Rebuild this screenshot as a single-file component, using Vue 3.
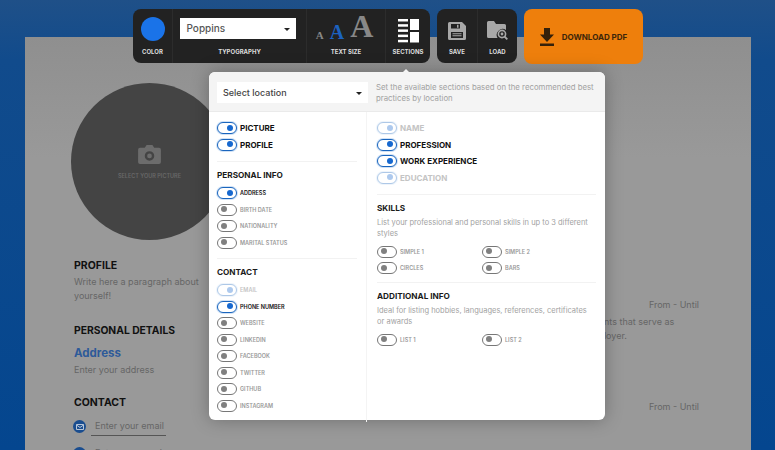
<script setup>
const topToggles = [
  { label: "Picture", on: true },
  { label: "Profile", on: true },
];
const personal = [
  { label: "Address", on: true },
  { label: "Birth date" },
  { label: "Nationality" },
  { label: "Marital status" },
];
const contact = [
  { label: "Email", on: true, locked: true },
  { label: "Phone number", on: true },
  { label: "Website" },
  { label: "LinkedIn" },
  { label: "Facebook" },
  { label: "Twitter" },
  { label: "GitHub" },
  { label: "Instagram" },
];
const mainSections = [
  { label: "Name", on: true, locked: true },
  { label: "Profession", on: true },
  { label: "Work experience", on: true },
  { label: "Education", on: true, locked: true },
];
const skills = ["Simple 1", "Simple 2", "Circles", "Bars"];
const extras = ["List 1", "List 2"];

function rowClass(item) {
  return { on: item.on, locked: item.locked };
}
</script>

<template>
  <div class="page">
    <div class="paper">
      <div class="leftCol">
        <div class="photo">
          <svg class="camera" viewBox="0 0 24 20" width="23" height="19">
            <path fill="#6c6c6c" fill-rule="evenodd" d="M2 3h5l2-3h6l2 3h5a2 2 0 0 1 2 2v13a2 2 0 0 1-2 2H2a2 2 0 0 1-2-2V5a2 2 0 0 1 2-2zm10 3.5a5 5 0 1 0 0 10 5 5 0 0 0 0-10zm0 2.5a2.500 2.500 0 1 1 0 5 2.500 2.500 0 0 1 0-5z" />
          </svg>
          <span class="photoText">SELECT YOUR PICTURE</span>
        </div>
        <h3 class="sheetTitle profileTitle">PROFILE</h3>
        <p class="sheetText">Write here a paragraph about<br />yourself!</p>
        <h3 class="sheetTitle detailsTitle">PERSONAL DETAILS</h3>
        <div class="addressLabel">Address</div>
        <p class="sheetText">Enter your address</p>
        <h3 class="sheetTitle contactTitle">CONTACT</h3>
        <div class="contactRow">
          <span class="contactDot">
            <svg viewBox="0 0 8 6" width="8" height="6">
              <path fill="none" stroke="#b9c6d8" stroke-width="1" d="M.5.500h7v5h-7zM.5 1l3.500 2.500L7.500 1" />
            </svg>
          </span>
          <span class="contactInput">Enter your email</span>
        </div>
        <div class="contactRow">
          <span class="contactDot"></span>
          <span class="contactInput">Enter your number</span>
        </div>
      </div>
      <div class="rightCol">
        <div class="dateLine firstDate">From - Until</div>
        <p class="sheetText jobText">achievements that serve as<br />for an employer.</p>
        <div class="dateLine secondDate">From - Until</div>
      </div>
    </div>

    <div class="toolbar">
      <div class="toolGroup">
        <div class="tool colorTool">
          <span class="colorSwatch"></span>
          <span class="toolLabel">COLOR</span>
        </div>
        <div class="tool typeTool">
          <div class="fontSelect">Poppins<span class="caret"></span></div>
          <span class="toolLabel">TYPOGRAPHY</span>
        </div>
        <div class="tool sizeTool">
          <div class="sizes">
            <span class="sizeSmall">A</span>
            <span class="sizeMedium">A</span>
            <span class="sizeLarge">A</span>
          </div>
          <span class="toolLabel">TEXT SIZE</span>
        </div>
        <div class="tool sectionsTool">
          <svg viewBox="0 0 21 24" width="21" height="24">
            <g fill="#fff">
              <rect x="0" y="0" width="10" height="2.500" />
              <rect x="0" y="5.200" width="10" height="2.500" />
              <rect x="0" y="10.400" width="10" height="2.500" />
              <rect x="0" y="15.600" width="10" height="2.500" />
              <rect x="0" y="20.800" width="10" height="2.500" />
              <rect x="12" y="0" width="9" height="11" />
              <rect x="12" y="13" width="9" height="10.500" />
            </g>
          </svg>
          <span class="toolLabel">SECTIONS</span>
        </div>
      </div>

      <div class="toolGroup">
        <div class="tool fileTool">
          <svg viewBox="0 0 18 18" width="18" height="18">
            <path fill="#a8a8a8" fill-rule="evenodd" d="M1.500 0H14l4 4v12.500a1.500 1.500 0 0 1-1.500 1.500h-15A1.500 1.500 0 0 1 0 16.500v-15A1.500 1.500 0 0 1 1.500 0zM3 2v4.500h9V2zm7.500.700H9v3h1.500zM3 10v6h12v-6zm1.500 1.200h9v1h-9zm0 2h9v1h-9z" />
          </svg>
          <span class="toolLabel">SAVE</span>
        </div>
        <div class="tool fileTool">
          <svg viewBox="0 0 21 19" width="21" height="19">
            <path fill="#a8a8a8" d="M0 1.500A1.500 1.500 0 0 1 1.500 0H7l2 3h8.500A1.500 1.500 0 0 1 19 4.500V9a6 6 0 0 0-8.500 8H1.500A1.500 1.500 0 0 1 0 15.500z" />
            <circle cx="15" cy="13" r="3.600" fill="none" stroke="#a8a8a8" stroke-width="1.600" />
            <circle cx="15" cy="13" r="1.400" fill="#a8a8a8" />
            <path stroke="#a8a8a8" stroke-width="1.800" d="M17.500 15.500 20.300 18.300" />
          </svg>
          <span class="toolLabel">LOAD</span>
        </div>
      </div>

      <button class="downloadBtn">
        <svg viewBox="0 0 14 18" width="14" height="18">
          <path fill="#35210a" d="M4 0h6v6.500h4L7 14 0 6.500h4zM0 15.500h14V18H0z" />
        </svg>
        DOWNLOAD PDF
      </button>
    </div>

    <div class="panel">
      <span class="notch"></span>
      <div class="panelHead">
        <div class="locationSelect">Select location<span class="caret"></span></div>
        <p class="panelHint">Set the available sections based on the recommended best practices by location</p>
      </div>
      <div class="panelBody">
        <div class="panelCol leftPanel">
          <div class="group firstGroup">
            <div v-for="item in topToggles" :key="item.label" class="switchRow big" :class="rowClass(item)">
              <span class="toggle"></span>{{ item.label }}
            </div>
          </div>
          <div class="group personalGroup">
            <h4 class="groupTitle">PERSONAL INFO</h4>
            <div v-for="item in personal" :key="item.label" class="switchRow" :class="rowClass(item)">
              <span class="toggle"></span>{{ item.label }}
            </div>
          </div>
          <div class="group lastGroup">
            <h4 class="groupTitle">CONTACT</h4>
            <div v-for="item in contact" :key="item.label" class="switchRow" :class="rowClass(item)">
              <span class="toggle"></span>{{ item.label }}
            </div>
          </div>
        </div>
        <div class="panelCol rightPanel">
          <div class="group firstGroup">
            <div v-for="item in mainSections" :key="item.label" class="switchRow big" :class="rowClass(item)">
              <span class="toggle"></span>{{ item.label }}
            </div>
          </div>
          <div class="group skillsGroup">
            <h4 class="groupTitle">SKILLS</h4>
            <p class="groupHint">List your professional and personal skills in up to 3 different styles</p>
            <div class="twoCols">
              <div v-for="label in skills" :key="label" class="switchRow">
                <span class="toggle"></span>{{ label }}
              </div>
            </div>
          </div>
          <div class="group lastGroup">
            <h4 class="groupTitle">ADDITIONAL INFO</h4>
            <p class="groupHint">Ideal for listing hobbies, languages, references, certificates or awards</p>
            <div class="twoCols">
              <div v-for="label in extras" :key="label" class="switchRow">
                <span class="toggle"></span>{{ label }}
              </div>
            </div>
          </div>
        </div>
      </div>
    </div>
  </div>
</template>

<style>
html,
body {
  margin: 0;
  overflow: hidden;
}
</style>

<style scoped>
.page {
  position: relative;
  width: 775px;
  height: 450px;
  overflow: hidden;
  box-sizing: border-box;
  padding: 37px 24px 0 25px;
  background: linear-gradient(#1f5088 0, #114b8c 60px, #04468f 100%);
  font-family: Inter, "Liberation Sans", sans-serif;
}

.paper {
  height: 500px;
  display: flex;
  background: linear-gradient(#8f8f8f, #999 120px);
}

.leftCol {
  width: 205px;
  padding: 46px 0 0 49px;
  flex: none;
  box-sizing: border-box;
}

.photo {
  width: 157px;
  height: 157px;
  margin-left: -3px;
  border-radius: 50%;
  background: #444;
  display: flex;
  flex-direction: column;
  align-items: center;
  padding-top: 62px;
  box-sizing: border-box;
}

.photoText {
  margin-top: 9px;
  font-size: 5.500px;
  font-weight: 600;
  color: #686868;
  white-space: nowrap;
}

.sheetTitle {
  margin: 0;
  font-size: 10.500px;
  line-height: 14px;
  font-weight: 700;
  color: #111;
  white-space: nowrap;
}

.profileTitle {
  margin-top: 19px;
  margin-bottom: -1px;
}

.detailsTitle {
  margin-top: 20px;
  font-size: 10.300px;
}

.contactTitle {
  margin-top: 19px;
  margin-bottom: 10px;
}

.sheetText {
  margin: 3px 0 0;
  font-size: 9px;
  line-height: 14px;
  color: #666;
  white-space: nowrap;
}

.addressLabel {
  margin-top: 9px;
  font-size: 11.500px;
  line-height: 14px;
  font-weight: 700;
  color: #2d5a99;
}

.contactRow {
  display: flex;
  align-items: flex-start;
  gap: 9px;
  height: 27px;
  white-space: nowrap;
}

.contactDot {
  width: 13px;
  height: 13px;
  margin-left: -1px;
  border-radius: 50%;
  background: #1a4d8f;
  flex: none;
  display: flex;
  align-items: center;
  justify-content: center;
}

.contactInput {
  width: 75px;
  box-sizing: border-box;
  margin-left: -4px;
  padding: 0 0 4px 4px;
  font-size: 9px;
  line-height: 11px;
  color: #666;
  border-bottom: 1px solid #555;
}

.rightCol {
  flex: 1;
  padding-right: 52px;
}

.dateLine {
  text-align: right;
  font-size: 9px;
  line-height: 14px;
  color: #666;
}

.firstDate {
  margin-top: 261px;
}

.jobText {
  margin: 3px 0 0;
  padding-left: 328px;
}

.secondDate {
  margin-top: 57px;
}

.toolbar {
  position: absolute;
  top: 9px;
  left: 133px;
  display: flex;
  gap: 7px;
}

.toolGroup {
  display: flex;
  height: 54px;
  border-radius: 8px;
  background: #222;
}

.tool {
  display: flex;
  flex-direction: column;
  align-items: center;
  justify-content: flex-end;
  padding-bottom: 8px;
  box-sizing: border-box;
  border-left: 1px solid #2c2c2c;
}

.tool:first-child {
  border-left: none;
}

.toolLabel {
  margin-top: 5px;
  font-size: 6px;
  line-height: 7px;
  font-weight: 700;
  color: #ddd;
  white-space: nowrap;
}

.colorTool {
  width: 39px;
}

.colorSwatch {
  width: 24px;
  height: 24px;
  margin-bottom: 2px;
  border-radius: 50%;
  background: #1a73e8;
}

.typeTool {
  width: 134px;
}

.fontSelect {
  position: relative;
  width: 116px;
  height: 21px;
  margin: 0 4px 4px 0;
  padding-left: 7px;
  box-sizing: border-box;
  background: #fff;
  font-size: 10px;
  line-height: 21px;
  font-weight: 500;
  color: #555;
}

.caret {
  position: absolute;
  right: 6px;
  top: 50%;
  margin-top: -1px;
  border: 3px solid transparent;
  border-top: 3px solid #222;
  border-bottom: none;
}

.sizeTool {
  width: 79px;
}

.sizes {
  display: flex;
  align-items: flex-end;
  gap: 6px;
  margin: 0 3px 1px 0;
  font-family: "Liberation Serif", serif;
  font-weight: 700;
  line-height: 1;
}

.sizeSmall {
  font-size: 11px;
  color: #888;
  margin-bottom: 1px;
}

.sizeMedium {
  font-size: 20px;
  color: #1c62c0;
}

.sizeLarge {
  font-size: 32px;
  margin-top: -4px;
  color: #888;
}

.sectionsTool {
  width: 45px;
}

.fileTool {
  width: 40px;
}

.fileTool .toolLabel {
  margin-top: 8px;
}

.downloadBtn {
  width: 119px;
  height: 55px;
  border: none;
  border-radius: 8px;
  background: #ee7f0c;
  color: #3d260a;
  font: 700 8px Inter, "Liberation Sans", sans-serif;
  display: flex;
  align-items: center;
  justify-content: center;
  gap: 8px;
  padding: 0;
}

.panel {
  position: absolute;
  top: 72px;
  left: 209px;
  width: 396px;
  height: 348px;
  display: flex;
  flex-direction: column;
  background: #fff;
  border-radius: 6px;
  box-shadow: 0 0 18px rgba(0, 0, 0, 0.28);
}

.notch {
  position: absolute;
  top: -3px;
  left: 194px;
  border: 3px solid transparent;
  border-bottom: 3px solid #f4f4f4;
  border-top: none;
}

.panelHead {
  height: 40px;
  flex: none;
  box-sizing: border-box;
  display: flex;
  align-items: center;
  gap: 8px;
  padding: 2px 10px 0 8px;
  background: #f4f4f4;
  border-bottom: 1px solid #eaeaea;
  border-radius: 6px 6px 0 0;
}

.locationSelect {
  position: relative;
  width: 151px;
  height: 21px;
  flex: none;
  padding-left: 6px;
  box-sizing: border-box;
  background: #fff;
  font-size: 9px;
  font-weight: 500;
  line-height: 21px;
  color: #444;
}

.panelHint {
  margin: 0;
  font-size: 7.800px;
  line-height: 11px;
  color: #a2a2a2;
}

.panelBody {
  flex: 1;
  display: flex;
}

.panelCol {
  box-sizing: border-box;
  padding: 8px 9px 0 8px;
}

.leftPanel {
  width: 158px;
  border-right: 1px solid #f4f4f4;
}

.rightPanel {
  flex: 1;
  padding-left: 10px;
}

.group {
  padding: 7px 0 8px;
  border-bottom: 1px solid #f2f2f2;
}

.firstGroup {
  padding-top: 0;
}

.personalGroup {
  padding-bottom: 7px;
}

.skillsGroup {
  padding-bottom: 5.500px;
}

.lastGroup {
  border-bottom: none;
}

.groupTitle {
  margin: 0 0 3px;
  font-size: 8.200px;
  line-height: 13px;
  font-weight: 700;
  color: #1a1a1a;
}

.groupHint {
  margin: -1.500px 0 5px;
  font-size: 7.500px;
  line-height: 11px;
  color: #a2a2a2;
}

.switchRow {
  height: 16.500px;
  display: flex;
  align-items: center;
  gap: 3px;
  font-size: 5.500px;
  font-weight: 600;
  color: #999;
  text-transform: uppercase;
  white-space: nowrap;
}

.switchRow.big {
  font-size: 8px;
  font-weight: 700;
}

.switchRow.on {
  color: #111;
}

.switchRow.locked {
  color: #c4c4c4;
}

.toggle {
  position: relative;
  width: 20px;
  height: 12px;
  flex: none;
  box-sizing: border-box;
  border: 1.500px solid #777;
  border-radius: 6px;
  background: #fff;
}

.toggle::after {
  content: "";
  position: absolute;
  top: 1.500px;
  left: 3px;
  width: 6px;
  height: 6px;
  border-radius: 50%;
  background: #808080;
}

.on .toggle {
  border-color: #1a65bd;
  box-shadow: 0 0 0 1px #cfe1f6;
}

.on .toggle::after {
  left: auto;
  right: 3px;
  background: #1668cf;
}

.locked .toggle {
  opacity: 0.35;
}

.twoCols {
  display: grid;
  grid-template-columns: 105px 1fr;
}
</style>
